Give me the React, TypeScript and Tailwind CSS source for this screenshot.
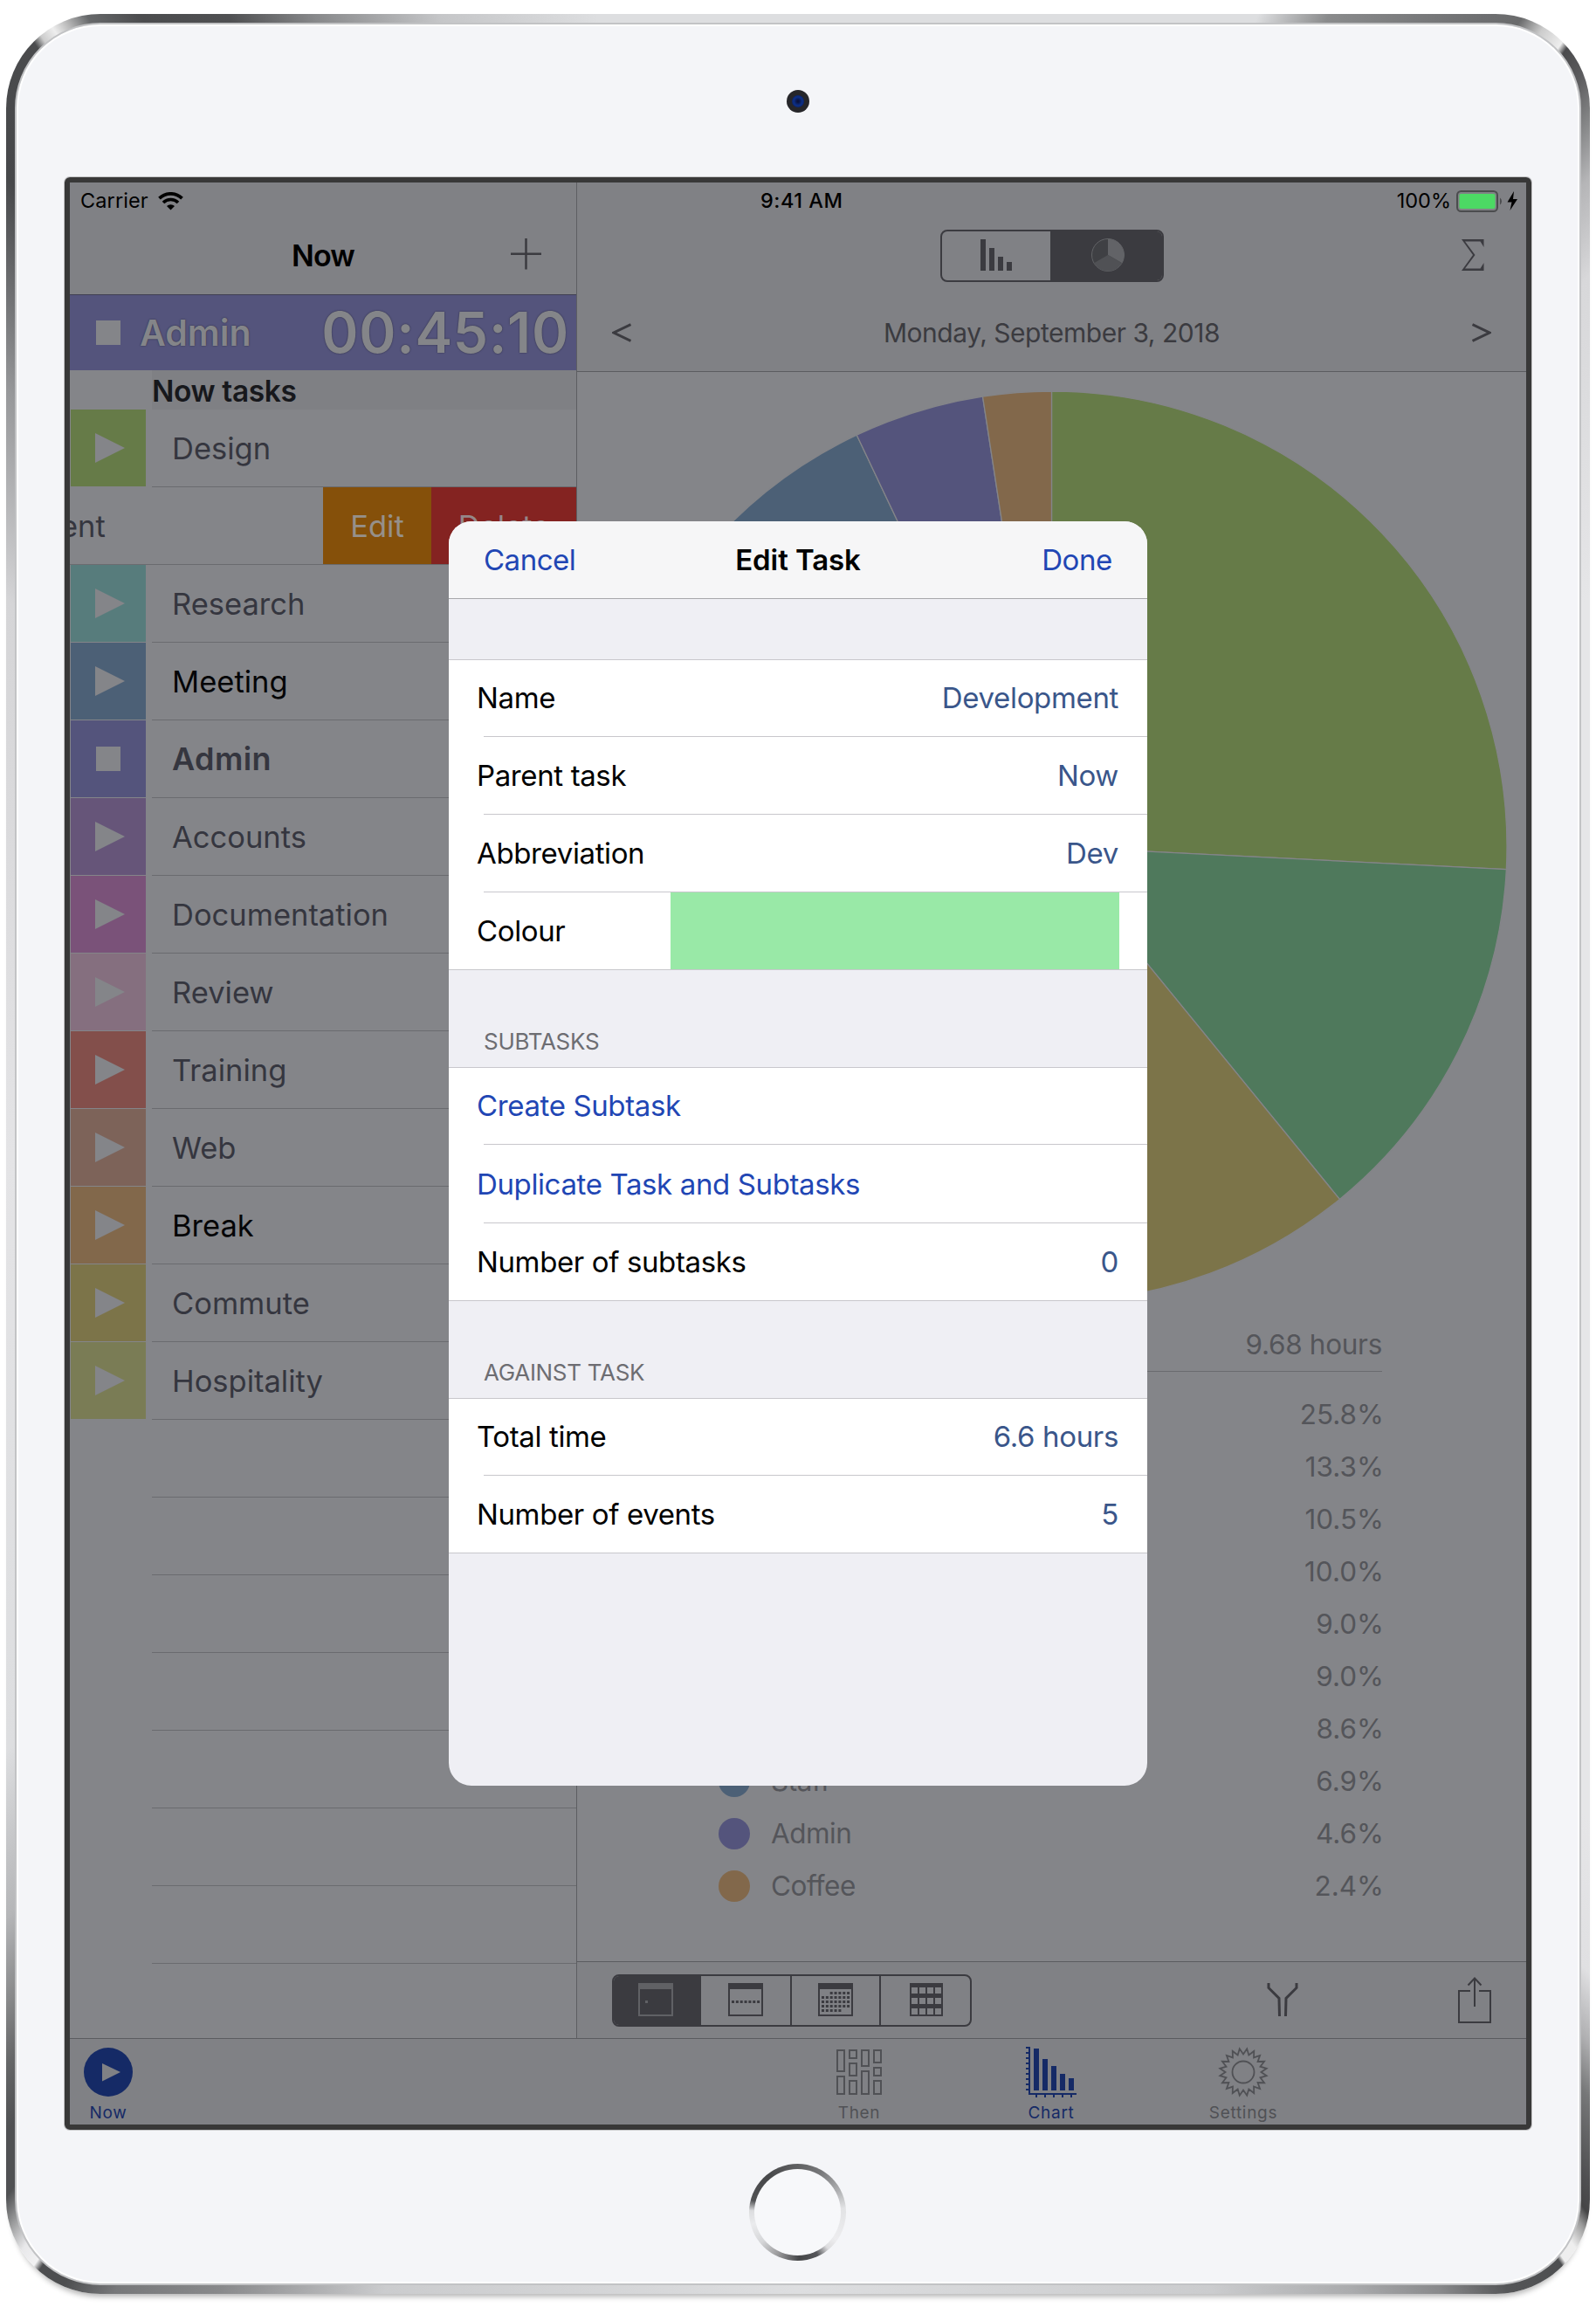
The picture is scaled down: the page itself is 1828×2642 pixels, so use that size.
import type { ReactNode } from "react";
import clsx from "clsx";

type Task = {
  name: string;
  color: string;
  text?: string;
  running?: boolean;
  swiped?: boolean;
};

const tasks: Task[] = [
  { name: "Design", color: "bg-[#667b48]" },
  { name: "Development", color: "bg-[#4f795c]", swiped: true },
  { name: "Research", color: "bg-[#577c7c]" },
  { name: "Meeting", color: "bg-[#4c6076]", text: "pt-px text-[#050507]" },
  { name: "Admin", color: "bg-[#54547c]", text: "text-[36px] font-semibold tracking-[0.4px] text-[#35363f]", running: true },
  { name: "Accounts", color: "bg-[#665579]" },
  { name: "Documentation", color: "bg-[#7a5279]" },
  { name: "Review", color: "bg-[#856f7f]" },
  { name: "Training", color: "bg-[#834f4b]" },
  { name: "Web", color: "bg-[#7d6359]" },
  { name: "Break", color: "bg-[#82684b]", text: "pt-px text-[#050507]" },
  { name: "Commute", color: "bg-[#7c7449]" },
  { name: "Hospitality", color: "bg-[#7a7c55]" },
];

const slices = [
  { name: "", percent: 25.8, color: "#667b48" },
  { name: "", percent: 13.3, color: "#4f795c" },
  { name: "", percent: 10.5, color: "#7c7449" },
  { name: "", percent: 9.98, color: "#577c7c" },
  { name: "", percent: 8.96, color: "#665579" },
  { name: "", percent: 8.96, color: "#7a5279" },
  { name: "", percent: 8.56, color: "#834f4b" },
  { name: "Staff", percent: 6.9, color: "#4c6076" },
  { name: "Admin", percent: 4.62, color: "#54547c" },
  { name: "Coffee", percent: 2.42, color: "#82684b" },
];

const R = 521.5;

function PieChart() {
  let angle = 0;
  const point = (a: number) => `${R + R * Math.sin(a)} ${R - R * Math.cos(a)}`;

  return (
    <svg width={R * 2} height={R * 2} viewBox={`0 0 ${R * 2} ${R * 2}`} className="mx-auto mt-[22px] block shrink-0 overflow-visible">
      {slices.map((s, i) => {
        const start = angle;
        angle += (s.percent / 100) * Math.PI * 2;
        return (
          <path
            key={i}
            d={`M${R} ${R}L${point(start)}A${R} ${R} 0 0 1 ${point(angle)}Z`}
            fill={s.color}
            stroke="#848589"
            strokeWidth="1.3"
          />
        );
      })}
    </svg>
  );
}

function PlayIcon() {
  return (
    <svg width="34" height="34" viewBox="0 0 34 34" className="ml-[3px]">
      <path d="M0 0L34 17L0 34Z" fill="#848589" />
    </svg>
  );
}

function WifiIcon() {
  return (
    <svg width="29" height="21" viewBox="0 0 29 21" fill="none" stroke="#000">
      <path d="M1.5 7.2A18.5 18.5 0 0 1 27.5 7.2" strokeWidth="3.8" />
      <path d="M6 12A12 12 0 0 1 23 12" strokeWidth="3.6" />
      <path d="M14.5 20.5L10 16A6.4 6.4 0 0 1 19 16Z" fill="#000" stroke="none" />
    </svg>
  );
}

function BatteryIcon() {
  return (
    <svg width="72" height="25" viewBox="0 0 72 25">
      <rect x="1" y="1" width="46" height="23" rx="4.5" fill="none" stroke="#4b4c4e" strokeWidth="2" />
      <rect x="3.5" y="4" width="41" height="17" rx="2" fill="#4cd964" />
      <path d="M50 8.5A5 5 0 0 1 50 16.5Z" fill="#4b4c4e" />
      <path d="M66 1L58.5 13.5H63.5L61.5 23L70 10H65Z" fill="#000" />
    </svg>
  );
}

function TaskRow({ task }: { task: Task }) {
  // A swiped row has slid left: only the tail of its name is still on screen
  if (task.swiped) {
    return (
      <div className="flex h-[89px] shrink-0 border-b border-[#6a6b6f]">
        <div className="flex w-[290px] items-center overflow-hidden pt-px">
          <span className="ml-[-11px] text-[#35363f]">{task.name.slice(-3)}</span>
        </div>
        <div className="flex w-[124px] items-center justify-center bg-[#85500a] pt-px text-[#96908a]">Edit</div>
        <div className="flex flex-1 items-center justify-center bg-[#842321] pt-px text-[#958789]">Delete</div>
      </div>
    );
  }
  return (
    <div className="flex h-[89px] shrink-0">
      <div className={clsx("ml-px flex h-[88px] w-[86px] items-center justify-center", task.color)}>
        {task.running ? <div className="h-7 w-7 bg-[#848589]" /> : <PlayIcon />}
      </div>
      <div
        className={clsx(
          "ml-[7px] flex flex-1 items-center border-b border-[#6a6b6f] pl-[23px]",
          task.text ?? "pt-px text-[#35363f]",
        )}
      >
        {task.name}
      </div>
    </div>
  );
}

function Sidebar() {
  return (
    <section className="flex w-[580px] flex-col overflow-hidden bg-[#848589] text-[34.5px] tracking-[0px]">
      <div className="flex h-10 shrink-0 items-center gap-[11px] bg-[#808185] pl-3 pt-[2px] text-[23.5px] tracking-[0.1px]">
        Carrier
        <WifiIcon />
      </div>
      <div className="flex h-[88px] shrink-0 items-center bg-[#808185] pb-[4px]">
        <div className="w-[120px]" />
        <h1 className="flex-1 pt-[3px] text-center text-[34px] font-semibold tracking-[-0.8px]">Now</h1>
        <svg width="120" height="36" viewBox="0 0 120 36" stroke="#3b3b40" strokeWidth="2.5">
          <path d="M62.5 0V35.5M45 17.8H80" />
        </svg>
      </div>
      <div className="flex h-[87px] shrink-0 items-center border-t border-[#3f3f52] bg-[#54547c] pl-[30px] pr-[8px] font-semibold text-[#848589] [text-shadow:0_0_2px_#2c2c40]">
        <div className="h-7 w-7 bg-[#848589]" />
        <span className="ml-[22px] pt-[2px] text-[41px] tracking-[0px]">Admin</span>
        <span className="ml-auto text-[64px] font-semibold tracking-[0.8px]">00:45:10</span>
      </div>
      <div className="flex h-[45px] shrink-0">
        <div className="w-[94px]" />
        <h2 className="flex flex-1 items-center bg-[#7f8084] pt-1 text-[33.5px] font-semibold tracking-[-0.4px] text-[#17181c]">
          Now tasks
        </h2>
      </div>
      {tasks.map((t) => (
        <TaskRow key={t.name} task={t} />
      ))}
      {Array.from({ length: 7 }, (_, i) => (
        <div key={i} className="ml-[94px] h-[89px] shrink-0 border-b border-[#6a6b6f]" />
      ))}
    </section>
  );
}

function ChartHeader() {
  return (
    <header className="flex h-[217px] shrink-0 flex-col border-b border-[#5b5c60] bg-[#808185]">
      <div className="flex h-10 items-center pr-[8px] pt-[2px] text-[23.5px]">
        <span className="ml-[210px] font-medium tracking-[0.5px]">9:41 AM</span>
        <span className="ml-auto mr-[6px] tracking-[0px]">100%</span>
        <BatteryIcon />
      </div>
      <div className="flex h-[88px] items-center">
        <div className="ml-[416px] flex h-[60px] w-[256px] overflow-hidden rounded-[8px] border-2 border-[#3b3b40]">
          <div className="flex w-[124px] items-center justify-center">
            <svg width="36" height="36" viewBox="0 0 36 36" fill="#3b3b40" className="mt-[-2px]">
              <path d="M0 0h6v36H0zM10 10h6v26h-6zM20 20h6v16h-6zM30 26h6v10h-6z" />
            </svg>
          </div>
          <div className="flex flex-1 items-center justify-center bg-[#3b3b40] pl-[4px]">
            <svg width="40" height="40" viewBox="0 0 40 40" className="mt-[-2px]">
              <circle cx="20" cy="20" r="18.5" fill="#3f4044" stroke="#626367" />
              <path d="M20 20V1.5A18.5 18.5 0 0 1 36 29.2Z" fill="#626367" />
              <path d="M20 20L36 29.2A18.5 18.5 0 0 1 4 29.2Z" fill="#505155" />
            </svg>
          </div>
        </div>
        <svg width="26" height="36" viewBox="0 0 26 36" className="ml-[341px] mt-[-2px]" fill="#3b3b40">
          <path d="M0 0H25.5V9L21.5 2.5H4L15.5 18L4 33.5H21.5L25.5 27V36H0L13 18Z" />
        </svg>
      </div>
      <div className="flex h-[88px] items-center pl-10 pr-10 text-[30px] text-[#3b3b40]">
        <svg width="22" height="22" viewBox="0 0 22 22" fill="none" stroke="#3b3b40" strokeWidth="3">
          <path d="M21.5 1.6L2 11L21.5 20.4" />
        </svg>
        <span className="flex-1 pt-px text-center tracking-[-0.48px]">Monday, September 3, 2018</span>
        <svg width="22" height="22" viewBox="0 0 22 22" fill="none" stroke="#3b3b40" strokeWidth="3">
          <path d="M0.5 1.6L20 11L0.5 20.4" />
        </svg>
      </div>
    </header>
  );
}

function Legend() {
  return (
    <div className="ml-[162px] mt-[19px] w-[760px] text-[31.5px] text-[#54555a]">
      <div className="flex h-[61px] items-center justify-end border-b border-[#6a6b6f]">9.68 hours</div>
      <ul className="pt-[19px]">
        {slices.map((s, i) => (
          <li key={i} className="flex h-[60px] items-center">
            <span className="h-9 w-9 rounded-full" style={{ backgroundColor: s.color }} />
            <span className="ml-[24px] tracking-[-0.5px]">{s.name}</span>
            <span className="-mr-[2px] ml-auto tracking-[0px]">{s.percent.toFixed(1)}%</span>
          </li>
        ))}
      </ul>
    </div>
  );
}

/* Small calendar glyphs of the range switch: day, week, month, year */
function dots(x: number, y: number, count: number) {
  return Array.from({ length: count }, (_, i) => (
    <rect key={`${x}-${y}-${i}`} x={x + i * 4.85} y={y} width="3" height="3" />
  ));
}

function CalendarFrame({ color, children }: { color: string; children: ReactNode }) {
  return (
    <svg width="40" height="38" viewBox="0 0 40 38" fill={color} className="mt-[-2px]">
      <path d="M0 0H40V38H0ZM2 7V36H38V7Z" fillRule="evenodd" />
      {children}
    </svg>
  );
}

function YearIcon() {
  return (
    <svg width="38" height="38" viewBox="0 0 38 38" className="mt-[-2px]">
      <rect width="38" height="38" fill="#3b3b40" />
      {[5, 17, 29].map((y) =>
        [2, 11, 20, 29].map((x) => <rect key={`${x}-${y}`} x={x} y={y} width="7" height="7" fill="#808185" />),
      )}
    </svg>
  );
}

function Toolbar() {
  return (
    <footer className="flex h-[88px] shrink-0 items-center border-t border-[#5b5c60] bg-[#808185] pl-[40px] pr-[40px]">
      <div className="flex h-[60px] w-[412px] divide-x-2 divide-[#3b3b40] overflow-hidden rounded-[8px] border-2 border-[#3b3b40]">
        <div className="flex w-[100px] items-center justify-center bg-[#3b3b40] pr-[2px]">
          <CalendarFrame color="#606165">{dots(8, 20, 1)}</CalendarFrame>
        </div>
        <div className="flex w-[104px] items-center justify-center">
          <CalendarFrame color="#3b3b40">{dots(4, 20, 7)}</CalendarFrame>
        </div>
        <div className="flex w-[102px] items-center justify-center">
          <CalendarFrame color="#3b3b40">
            {dots(13.7, 10, 5)}
            {dots(4, 15, 7)}
            {dots(4, 20, 7)}
            {dots(4, 25, 7)}
            {dots(4, 30, 5)}
          </CalendarFrame>
        </div>
        <div className="flex flex-1 items-center justify-center pl-[2px]">
          <YearIcon />
        </div>
      </div>
      <svg width="36" height="39" viewBox="0 0 36 39" className="ml-auto" fill="none" stroke="#3b3b40" strokeWidth="3">
        <path d="M2 0V5.5L14 17.5L14.5 38M34 0V5.5L22 17.5L21.5 38" />
      </svg>
      <svg width="38" height="53" viewBox="0 0 38 53" className="ml-[183px]" fill="none" stroke="#3b3b40" strokeWidth="2">
        <path d="M14 16H1V52H37V16H24M19 34V1M11.5 9.5L19 1.5L26.5 9.5" />
      </svg>
    </footer>
  );
}

function ThenIcon() {
  const boxes = [
    [0, 0, 26], [0, 30, 22],
    [14, 0, 11], [14, 15, 16], [14, 35, 17],
    [28, 0, 20], [28, 24, 28],
    [42, 0, 16], [42, 20, 11], [42, 35, 17],
  ];
  return (
    <svg width="52" height="52" viewBox="0 0 52 52" fill="none" stroke="#505155" strokeWidth="2">
      {boxes.map(([x, y, h]) => (
        <rect key={`${x}-${y}`} x={x + 1} y={y + 1} width="8" height={h - 2} />
      ))}
    </svg>
  );
}

function ChartIcon() {
  return (
    <svg width="58" height="58" viewBox="0 0 58 58" fill="#152a66">
      <path d="M3 0H5V53H58V55H3Z" />
      {Array.from({ length: 9 }, (_, i) => (
        <rect key={i} x="0" y={i * 6} width="4" height="2" />
      ))}
      {[2, 14, 22, 31, 36].map((y, i) => (
        <g key={y}>
          <rect x={9 + i * 10} y={y} width="6" height={50 - y} />
          <rect x={11 + i * 10} y="55" width="2" height="3" />
        </g>
      ))}
    </svg>
  );
}

function GearIcon() {
  const teeth = Array.from({ length: 40 }, (_, i) => {
    const a = (i * 9 * Math.PI) / 180;
    const r = i % 2 ? 27 : 20.5;
    return `${(29 + r * Math.sin(a)).toFixed(2)},${(29 - r * Math.cos(a)).toFixed(2)}`;
  }).join(" ");
  return (
    <svg width="58" height="58" viewBox="0 0 58 58" fill="none" stroke="#505155" strokeWidth="1.8">
      <polygon points={teeth} />
      <circle cx="29" cy="29" r="12.5" />
    </svg>
  );
}

function Tab({ label, active, children }: { label: string; active?: boolean; children: ReactNode }) {
  return (
    <div className={clsx("flex w-[88px] flex-col items-center", active ? "text-[#152a66]" : "text-[#505155]")}>
      <div className="flex h-[76px] items-center">{children}</div>
      <span className="mt-[-2px] text-[19px] leading-[22px] tracking-[0.7px]">{label}</span>
    </div>
  );
}

function TabBar() {
  return (
    <nav className="flex h-[99px] shrink-0 border-t border-[#5b5c60] bg-[#808185]">
      <Tab label="Now" active>
        <svg width="56" height="56" viewBox="0 0 56 56">
          <circle cx="28" cy="28" r="28" fill="#152a66" />
          <path d="M21 18L42 28L21 38.5Z" fill="#808185" />
        </svg>
      </Tab>
      <div className="w-[772px]" />
      <Tab label="Then">
        <ThenIcon />
      </Tab>
      <div className="w-[132px]" />
      <Tab label="Chart" active>
        <ChartIcon />
      </Tab>
      <div className="w-[132px]" />
      <Tab label="Settings">
        <GearIcon />
      </Tab>
    </nav>
  );
}

function FormRow({ label, value, link, children }: {
  label: string;
  value?: string;
  link?: boolean;
  children?: ReactNode;
}) {
  return (
    <div className="group relative flex h-[89px] items-center pl-[32px] pr-8 first:h-[88px]">
      <span className={link ? "text-[#2146b4]" : "text-black"}>{label}</span>
      {value && <span className="ml-auto mr-px tracking-[-0.35px] text-[#3a568a]">{value}</span>}
      {children}
      <div className="absolute bottom-0 left-10 right-0 h-px bg-[#c8c7cc] group-last:left-0" />
    </div>
  );
}

function FormSection({ title, children }: { title: string; children: ReactNode }) {
  return (
    <>
      <h3 className="flex h-[111px] items-end pb-[11px] pl-[40px] text-[26px] leading-[36px] tracking-[-0.3px] text-[#6d6d72]">
        {title}
      </h3>
      <div className="border-t border-[#c8c7cc] bg-white">{children}</div>
    </>
  );
}

function EditTaskModal() {
  return (
    <div className="absolute left-[434px] top-[388px] h-[1448px] w-[800px] overflow-hidden rounded-[26px] bg-[#efeff4] text-[33px] tracking-[-0.38px]">
      <div className="flex h-[89px] items-center justify-between border-b border-[#a7a7ab] bg-[#f6f6f7] px-10 pt-px">
        <button className="w-[150px] text-left tracking-[-0.5px] text-[#2146b4]">Cancel</button>
        <h2 className="font-semibold tracking-[-0.1px] text-black">Edit Task</h2>
        <button className="w-[150px] text-right text-[#2146b4]">Done</button>
      </div>
      <div className="mt-[69px] border-t border-[#c8c7cc] bg-white">
        <FormRow label="Name" value="Development" />
        <FormRow label="Parent task" value="Now" />
        <FormRow label="Abbreviation" value="Dev" />
        <FormRow label="Colour">
          <div className="ml-auto h-[89px] w-[514px] bg-[#99e9a7]" />
        </FormRow>
      </div>
      <FormSection title="SUBTASKS">
        <FormRow label="Create Subtask" link />
        <div className="relative flex h-[90px] items-center pl-[32px] pt-[2px] text-[#2146b4]">
          Duplicate Task and Subtasks
          <div className="absolute bottom-0 left-10 right-0 h-px bg-[#c8c7cc]" />
        </div>
        <FormRow label="Number of subtasks" value="0" />
      </FormSection>
      <FormSection title="AGAINST TASK">
        <FormRow label="Total time" value="6.6 hours" />
        <FormRow label="Number of events" value="5" />
      </FormSection>
    </div>
  );
}

export default function App() {
  return (
    <div className="h-[2642px] w-[1828px] overflow-hidden bg-white pl-[7px] pt-[16px] font-[Inter,'Liberation_Sans',sans-serif] text-black">
      <div className="h-[2611px] w-[1814px] rounded-[108px] p-[10px] shadow-[0_8px_6px_-5px_rgba(0,0,0,0.3)] bg-[conic-gradient(#dddee0_0deg,#dddee0_22deg,#8a8b8c_25deg,#6e6f71_31deg,#6a6b6c_32.500deg,#cccccc_33.500deg,#eeeeee_34.500deg,#4a4a4c_34.800deg,#5c5c5e_36deg,#88898a_37.500deg,#b5b5b7_39deg,#d8d8da_42deg,#e6e6e8_55deg,#e6e6e8_130deg,#e0e0e2_136deg,#b0b0b2_138.300deg,#777879_140deg,#505052_142.400deg,#454546_143.300deg,#999999_143.800deg,#eeeeee_144.600deg,#eeeeee_145.300deg,#4d4e50_145.500deg,#555658_148deg,#88898b_150.500deg,#aaabad_154deg,#cbccce_160deg,#dddee0_180deg,#cbccce_200deg,#88898b_207deg,#77787a_211deg,#4d4e50_213deg,#4d4e50_214.200deg,#f2f2f3_214.500deg,#e8e8ea_215.300deg,#999a9b_216.300deg,#505153_217.200deg,#505153_219deg,#666768_221deg,#88898a_223deg,#b5b6b8_226deg,#dddee0_233deg,#e4e4e6_270deg,#d5d5d7_305deg,#97989a_314deg,#6a6b6d_318deg,#47484a_321deg,#4b4c4e_325.500deg,#cccccc_325.900deg,#eeeeee_326.500deg,#bbbbbb_327.100deg,#66686a_328deg,#4b4c4e_330deg,#4f5052_333.400deg,#88898b_337deg,#c5c6c8_342.500deg,#dddee0_350deg,#dddee0_360deg)]">
        <div className="h-full w-full rounded-[98px] border-2 border-[#c2c3c5] bg-[#f4f5f8] shadow-[inset_0_0_0_2px_#ffffff]">
          <div className="flex h-[175px] items-center justify-center">
            <div className="mr-px flex h-[26px] w-[26px] items-center justify-center rounded-full bg-[#26262a]">
              <div className="h-[14px] w-[14px] rounded-full bg-[radial-gradient(circle,#0a1340_10%,#0d3088_50%,#0a1340_100%)]" />
            </div>
          </div>

          <div className="mx-auto flex h-[2236px] w-[1680px] flex-col rounded-[6px] border-[6px] border-[#383838] shadow-[0_0_0_1px_#c4c4c6]">
            <div className="relative flex flex-1 flex-col bg-[#848589] text-[33.5px] tracking-[-0.3px]">
              <div className="flex h-[2125px]">
                <Sidebar />
                <main className="flex flex-1 flex-col border-l border-[#5d5e62]">
                  <ChartHeader />
                  <div className="flex flex-1 flex-col">
                    <PieChart />
                    <Legend />
                  </div>
                  <Toolbar />
                </main>
              </div>
              <TabBar />
              <EditTaskModal />
            </div>
          </div>

          {/* Home button */}
          <div className="ml-[839px] mt-[39px] h-[111px] w-[111px] rounded-full bg-[conic-gradient(#5f6062_0deg,#77787a_30deg,#aaabad_60deg,#e2e3e5_85deg,#ededef_125deg,#dddddf_140deg,#55565a_155deg,#454648_178deg,#99999b_205deg,#d5d6d8_230deg,#eaebed_255deg,#dcdddf_272deg,#505153_285deg,#47484a_320deg,#5f6062_360deg)] p-[6px]">
            <div className="h-full w-full rounded-full bg-[#f7f8fa]" />
          </div>
        </div>
      </div>
    </div>
  );
}
